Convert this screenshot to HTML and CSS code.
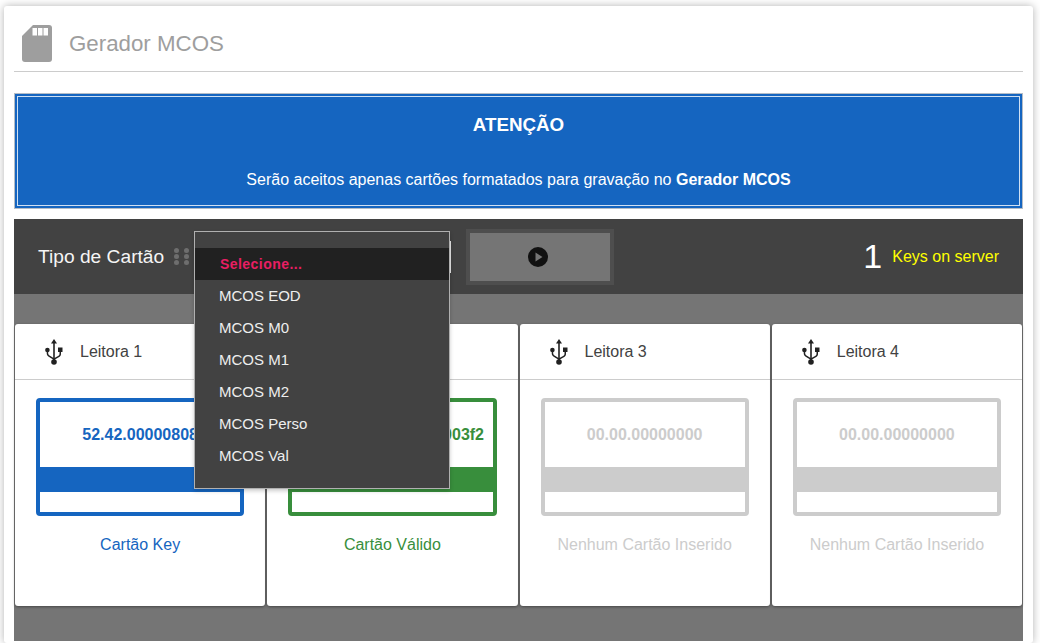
FILE: index.html
```html
<!DOCTYPE html>
<html lang="pt-BR">
<head>
<meta charset="utf-8">
<title>Gerador MCOS</title>
<link rel="stylesheet" href="styles.css">
</head>
<body>
<main class="sheet">
  <header class="title">
    <svg class="sd" viewBox="0 0 30 37" width="30" height="37"><path fill="#9e9e9e" d="M11 0h16a3 3 0 0 1 3 3v31a3 3 0 0 1-3 3H3a3 3 0 0 1-3-3V11z"/><path fill="#fff" d="M10.500 3H15v7.500h-4.500zM16 3h4.500v7.500H16zM21.500 3H26v7.500h-4.500z"/></svg>
    <h1>Gerador MCOS</h1>
  </header>
  <section class="alert">
    <h2>ATENÇÃO</h2>
    <p>Serão aceitos apenas cartões formatados para gravação no <b>Gerador MCOS</b></p>
  </section>
  <section class="panel">
    <div class="bar">
      <span class="bar-label">Tipo de Cartão</span>
      <span class="grip"><i></i><i></i><i></i><i></i><i></i><i></i></span>
      <span class="select-stub"></span>
      <span class="run">
        <svg viewBox="0 0 20 20" width="20" height="20"><circle cx="10" cy="10" r="10" fill="#111"/><path d="M7.500 5.500l7 4.500-7 4.500z" fill="#757575"/></svg>
      </span>
      <span class="keys"><span class="keys-n">1</span><span class="keys-t">Keys on server</span></span>
    </div>
    <div class="readers">
      <article class="reader key">
        <div class="reader-head"><svg class="usb" viewBox="0 0 18 26" width="18" height="26"><use href="#usb"/></svg>Leitora 1</div>
        <div class="reader-body">
          <div class="chip"><div class="chip-id">52.42.00000808</div><div class="chip-band"></div><div class="chip-foot"></div></div>
          <div class="status">Cartão Key</div>
        </div>
      </article>
      <article class="reader valid">
        <div class="reader-head"><svg class="usb" viewBox="0 0 18 26" width="18" height="26"><use href="#usb"/></svg>Leitora 2</div>
        <div class="reader-body">
          <div class="chip"><div class="chip-id">52.42.00000000000003f2</div><div class="chip-band"></div><div class="chip-foot"></div></div>
          <div class="status">Cartão Válido</div>
        </div>
      </article>
      <article class="reader">
        <div class="reader-head"><svg class="usb" viewBox="0 0 18 26" width="18" height="26"><use href="#usb"/></svg>Leitora 3</div>
        <div class="reader-body">
          <div class="chip"><div class="chip-id">00.00.00000000</div><div class="chip-band"></div><div class="chip-foot"></div></div>
          <div class="status">Nenhum Cartão Inserido</div>
        </div>
      </article>
      <article class="reader">
        <div class="reader-head"><svg class="usb" viewBox="0 0 18 26" width="18" height="26"><use href="#usb"/></svg>Leitora 4</div>
        <div class="reader-body">
          <div class="chip"><div class="chip-id">00.00.00000000</div><div class="chip-band"></div><div class="chip-foot"></div></div>
          <div class="status">Nenhum Cartão Inserido</div>
        </div>
      </article>
    </div>
    <ul class="menu">
      <li class="active">Selecione...</li>
      <li>MCOS EOD</li>
      <li>MCOS M0</li>
      <li>MCOS M1</li>
      <li>MCOS M2</li>
      <li>MCOS Perso</li>
      <li>MCOS Val</li>
    </ul>
  </section>
</main>
<svg class="defs" width="0" height="0"><defs><g id="usb" fill="#212121"><path d="M8.200 4h1.600v18h-1.600z"/><path d="M9 0l3 4.500H6z"/><circle cx="9" cy="23" r="2.800"/><circle cx="2.400" cy="11" r="2.300"/><path d="M13 8.500h4.500V13H13z"/><path d="M1.700 12h1.500v2.200c0 1 .5 1.800 1.300 2.300l4.500 2.700v1.800l-5.300-3.200c-1.300-.8-2-2-2-3.500zM14.500 12H16v3c0 1.200-.7 2.400-1.800 3.100L9 21v-1.800l4.500-2.500c.6-.4 1-1.100 1-1.800z"/></g></defs></svg>
</body>
</html>
```
FILE: styles.css
```css
* { box-sizing: border-box; }
html, body { margin: 0; height: 100%; overflow: hidden; background: #fff; }
body { padding: 6px 7px 0 4px; font-family: "Liberation Sans", Arial, sans-serif; }
.defs { position: absolute; }
.sheet { background: #fff; height: 100%; padding: 0 10px; border-radius: 3px; box-shadow: 0 0 8px rgba(0,0,0,.3); }
.title { height: 66px; display: flex; align-items: center; gap: 17px; padding: 10px 0 0 8px; border-bottom: 1px solid #ccc; }
.title h1 { margin: 0; font-size: 22.3px; font-weight: 400; color: #9e9e9e; }
.alert { margin-top: 21px; height: 116px; background: #1565c0; border: 1px solid #b4bcc6; box-shadow: inset 0 0 0 2px #1565c0, inset 0 0 0 3px #cfe0f3; color: #fff; text-align: center; }
.alert h2 { margin: 0; padding-top: 20px; font-size: 18.8px; line-height: 22px; font-weight: 700; }
.alert p { margin: 34px 0 0; font-size: 16px; line-height: 20px; }
.panel { position: relative; margin-top: 10px; height: 422px; background: #757575; }
.bar { height: 75px; background: #424242; display: flex; align-items: center; padding: 0 24px; color: #fff; }
.bar-label { font-size: 19.2px; width: 126px; white-space: nowrap; color: #f5f5f5; }
.grip { display: grid; grid-template-columns: 5px 5px; gap: 1px 5px; margin-left: 10px; width: 15px; flex: none; }
.grip i { width: 5px; height: 5px; border-radius: 50%; background: #6e6e6e; }
.select-stub { width: 262px; height: 32px; border-right: 2px solid #e6e6e6; flex: none; }
.run { margin-left: 15px; width: 148px; height: 56px; border: 4px solid #4e4e4e; background: #757575; display: flex; align-items: center; justify-content: center; flex: none; }
.run svg { display: block; margin-right: 4px; }
.keys { margin-left: auto; display: flex; align-items: center; gap: 10px; }
.keys-n { font-size: 34px; font-weight: 400; }
.keys-t { font-size: 16px; color: #ff0; }
.readers { margin-top: 30px; display: grid; grid-template-columns: repeat(4, 1fr); column-gap: 2px; padding: 0 1px; }
.reader { background: #fff; height: 282px; border-radius: 3px; box-shadow: 0 1px 3px rgba(0,0,0,.4); color: #ccc; }
.reader-head { height: 56px; display: flex; align-items: center; gap: 17px; padding: 1px 0 0 30px; border-bottom: 1px solid #ccc; font-size: 16px; color: #424242; }
.reader-body { padding: 18px 21px 0; }
.chip { border: 4px solid currentColor; border-radius: 4px; height: 118px; }
.chip-id { height: 65px; padding-top: 1px; display: flex; align-items: center; justify-content: center; font-size: 16px; font-weight: 700; white-space: nowrap; }
.chip-band { height: 25px; background: currentColor; }
.status { margin-top: 19px; text-align: center; font-size: 16px; line-height: 20px; }
.key { color: #1565c0; }
.valid { color: #388e3c; }
.menu { position: absolute; left: 180px; top: 12px; width: 256px; height: 258px; margin: 0; padding: 16px 0 0; list-style: none; background: #424242; border: 1px solid #b0b0b0; box-shadow: 0 2px 4px rgba(0,0,0,.2); }
.menu li { height: 32px; padding-left: 24px; font-size: 15px; line-height: 32px; color: #eee; }
.menu .active { background: #212121; color: #e91e63; font-weight: 700; font-size: 14px; letter-spacing: .45px; padding-left: 25px; }
```
